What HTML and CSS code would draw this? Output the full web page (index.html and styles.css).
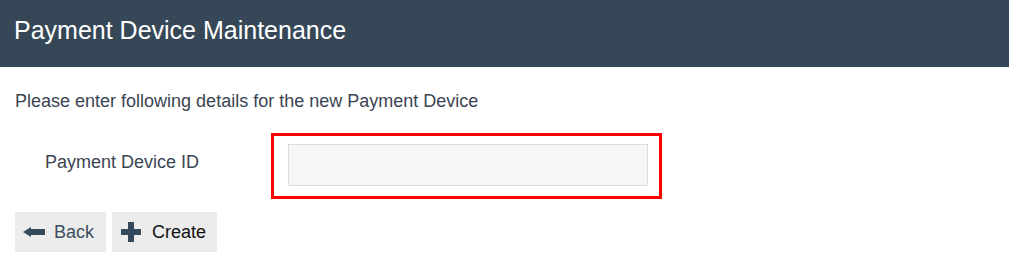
FILE: index.html
```html
<!DOCTYPE html>
<html lang="en">
<head>
  <meta charset="UTF-8" />
  <title>Payment Device Maintenance</title>
  <link rel="stylesheet" href="styles.css">
</head>
<body>

  <!-- Cabecera -->
  <div class="cabecera">Payment Device Maintenance</div>

  <div class="contenido">
    <p class="intro">Please enter following details for the new Payment Device</p>

    <div class="fila">
      <label class="etiqueta" for="deviceId">Payment Device ID</label>
      <div class="resaltado">
        <input type="text" id="deviceId" />
      </div>
    </div>

    <div class="acciones">
      <button class="btn btn-back">
        <svg width="22" height="10" viewBox="0 0 22 10"><path d="M0 5 L8 0 L8 2 L22 2 L22 8 L8 8 L8 10 Z" fill="#344a5c"/></svg>
        Back
      </button>
      <button class="btn btn-create">
        <svg width="20" height="20" viewBox="0 0 20 20"><path d="M7 0 H13 V7 H20 V13 H13 V20 H7 V13 H0 V7 H7 Z" fill="#344a5c"/></svg>
        Create
      </button>
    </div>
  </div>

</body>
</html>
```

FILE: styles.css
```css
* {
  margin: 0;
  padding: 0;
  box-sizing: border-box;
}

body {
  font-family: "Liberation Sans", Arial, sans-serif;
  background: #fff;
  color: #3a4452;
}

/* Cabecera */
.cabecera {
  height: 67px;
  background-color: #364858;
  color: #fff;
  font-size: 25px;
  padding: 16px 14px 0;
}

.contenido {
  padding: 24px 15px 0;
}

.intro {
  font-size: 18px;
  line-height: 20px;
}

.fila {
  display: flex;
  align-items: flex-start;
  margin-top: 22px;
}

.etiqueta {
  width: 256px;
  padding-left: 30px;
  margin-top: 19px;
  font-size: 18px;
  line-height: 20px;
}

.resaltado {
  border: 3px solid #ff0000;
  width: 391px;
  height: 66px;
  padding: 8px 11px 0 14px;
}

.resaltado input {
  width: 360px;
  height: 42px;
  border: 1px solid #dcdcdc;
  background-color: #f7f7f7;
  outline: none;
}

.acciones {
  display: flex;
  gap: 6px;
  margin-top: 13px;
}

.btn {
  display: flex;
  align-items: center;
  height: 40px;
  border: none;
  background-color: #ececec;
  font-family: inherit;
  font-size: 18px;
  cursor: pointer;
}

.btn-back {
  width: 91px;
  padding-left: 8px;
  gap: 9px;
  color: #3d4e60;
}

.btn-create {
  width: 105px;
  padding-left: 9px;
  gap: 11px;
  color: #111;
}
```
